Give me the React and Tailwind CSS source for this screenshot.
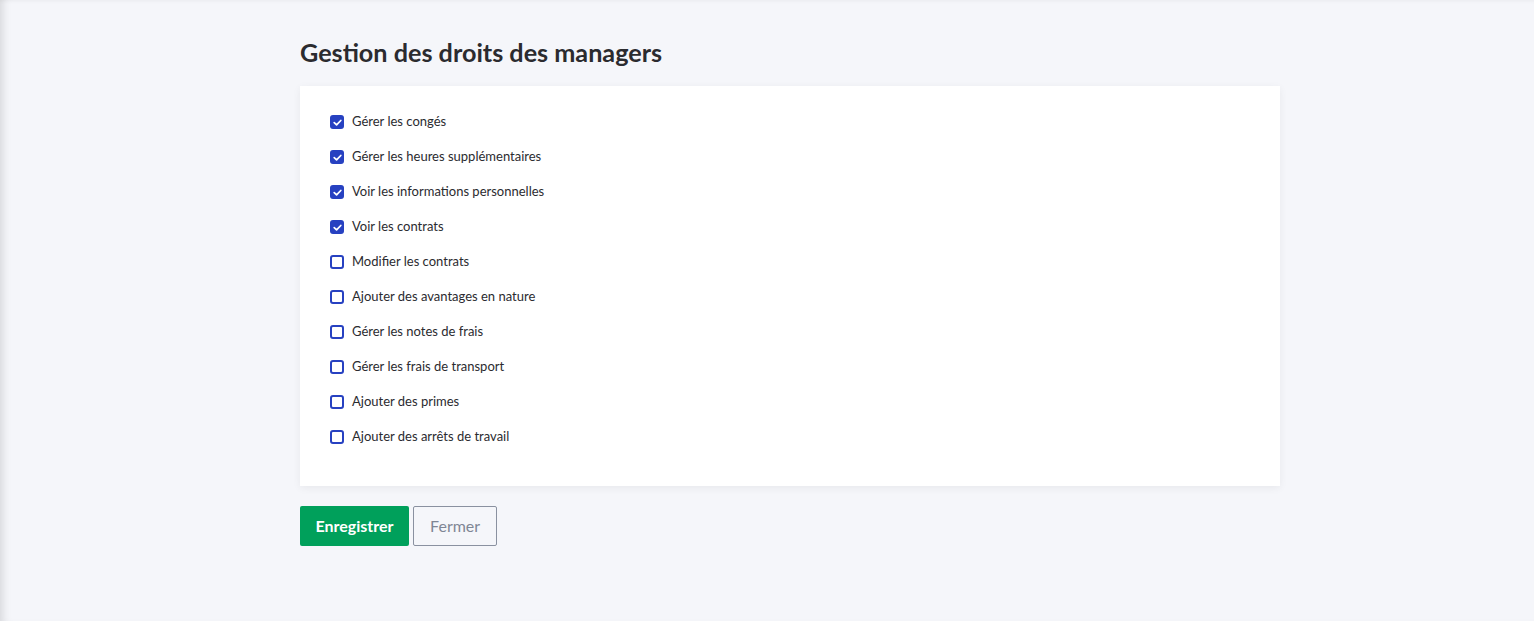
import { useState } from "react";

const ITEMS = [
  { label: "Gérer les congés", on: true },
  { label: "Gérer les heures supplémentaires", on: true },
  { label: "Voir les informations personnelles", on: true },
  { label: "Voir les contrats", on: true },
  { label: "Modifier les contrats", on: false },
  { label: "Ajouter des avantages en nature", on: false },
  { label: "Gérer les notes de frais", on: false },
  { label: "Gérer les frais de transport", on: false },
  { label: "Ajouter des primes", on: false },
  { label: "Ajouter des arrêts de travail", on: false },
];

const Box = ({ checked }) =>
  checked ? (
    <span className="w-[14px] h-[14px] rounded-[3px] bg-[#2741c1] flex items-center justify-center shrink-0">
      <svg viewBox="0 0 12 12" className="w-[11px] h-[11px]" fill="none">
        <path d="M2.4 6.2 L5 8.6 L9.6 3.8" stroke="#fff" strokeWidth="1.9" strokeLinecap="round" strokeLinejoin="round" />
      </svg>
    </span>
  ) : (
    <span className="w-[14px] h-[14px] rounded-[3px] border-2 border-[#2741c1] bg-white shrink-0" />
  );

export default function App() {
  const [rights, setRights] = useState(ITEMS);

  const toggle = (i) =>
    setRights((r) => r.map((x, j) => (j === i ? { ...x, on: !x.on } : x)));

  return (
    <div className="min-h-[621px] bg-[#f5f6fa] font-['Lato',sans-serif] shadow-[inset_9px_0_8px_-6px_rgba(0,0,0,0.12),inset_0_4px_5px_-4px_rgba(0,0,0,0.06)]">
      <div className="w-[980px] ml-[300px] pt-[37px]">
        <h1 className="text-[25.2px] leading-[30px] font-bold text-[#2b2b2f]">Gestion des droits des managers</h1>

        {/* Rights list */}
        <div className="mt-[19px] bg-white shadow-[0_2px_8px_rgba(0,0,0,0.06)] pt-[27px] pb-[40px] px-[30px] flex flex-col gap-[17px]">
          {rights.map((r, i) => (
            <label key={r.label} onClick={() => toggle(i)} className="flex items-center gap-[8px] h-[18px] cursor-pointer">
              <Box checked={r.on} />
              <span className="text-[13px] text-[#2b2b2f]">{r.label}</span>
            </label>
          ))}
        </div>

        <div className="mt-[20px] flex gap-[4px]">
          <button className="h-[40px] px-[15.5px] rounded-[2px] bg-[#00a05b] text-white text-[16px] font-bold">Enregistrer</button>
          <button className="h-[40px] px-[16px] rounded-[2px] border border-[#8a91a0] bg-[#f5f6fa] text-[#7f8695] text-[16px]">Fermer</button>
        </div>
      </div>
    </div>
  );
}
